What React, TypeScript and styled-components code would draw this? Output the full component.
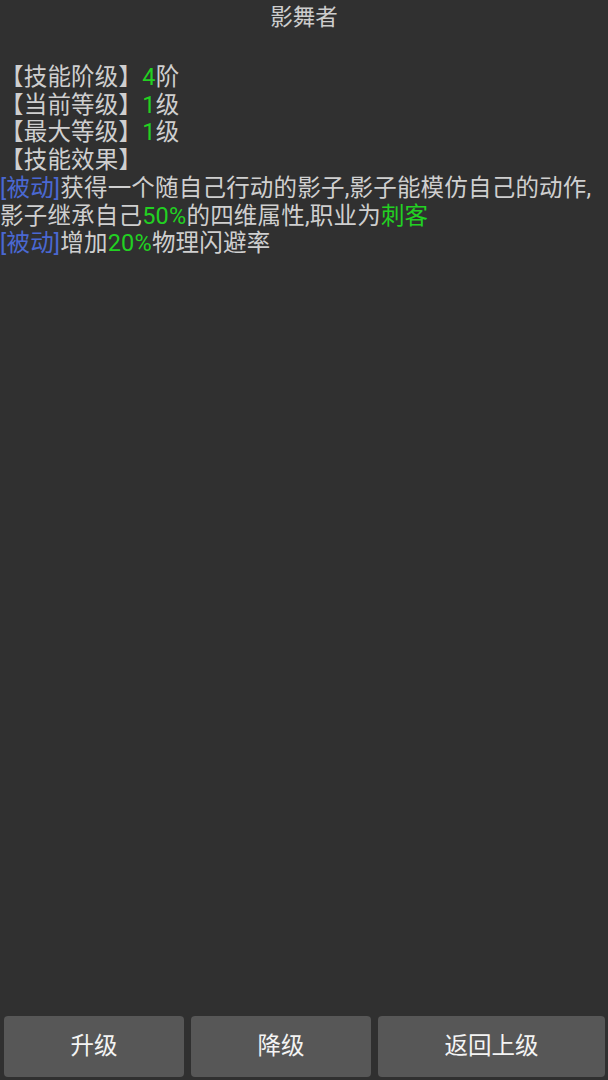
import styled, { createGlobalStyle } from "styled-components";

const GlobalStyle = createGlobalStyle`
    html, body {
        margin: 0;
        padding: 0;
        background-color: #303030;
    }
    body {
        font-family: Roboto, "Noto Sans CJK SC", sans-serif;
    }
`;

const Page = styled.div`
    height: 1080px;
    display: flex;
    flex-direction: column;
    background-color: #303030;
    color: #cfcfcf;
`;

const Title = styled.div`
    text-align: center;
    font-size: 22.5px;
    line-height: 28px;
    padding-top: 3px;
    color: #cdcdcd;
`;

const Content = styled.div`
    flex: 1;
    padding: 33px 0 0 0;
    font-size: 23.5px;
    line-height: 27.7px;
    letter-spacing: 0.2px;
`;

const Line = styled.div`
    white-space: nowrap;
`;

const Green = styled.span`
    color: #22d122;
`;

const Blue = styled.span`
    color: #4a68d2;
`;

const ButtonRow = styled.div`
    display: flex;
    gap: 7px;
    padding: 0 3px 3px 4px;
`;

const Button = styled.button`
    flex: 1 1 auto;
    height: 61px;
    padding: 0;
    border: none;
    border-radius: 4px;
    background-color: #575757;
    color: #f4f4f4;
    font-family: Roboto, "Noto Sans CJK SC", sans-serif;
    font-size: 23.5px;
    line-height: 1;
    cursor: pointer;
`;

export default function App() {
    return (
        <Page>
            <GlobalStyle />
            <Title>影舞者</Title>
            <Content>
                <Line>【技能阶级】<Green>4</Green>阶</Line>
                <Line>【当前等级】<Green>1</Green>级</Line>
                <Line>【最大等级】<Green>1</Green>级</Line>
                <Line>【技能效果】</Line>
                <Line><Blue>[被动]</Blue>获得一个随自己行动的影子,影子能模仿自己的动作,</Line>
                <Line>影子继承自己<Green>50%</Green>的四维属性,职业为<Green>刺客</Green></Line>
                <Line><Blue>[被动]</Blue>增加<Green>20%</Green>物理闪避率</Line>
            </Content>
            <ButtonRow>
                <Button>升级</Button>
                <Button>降级</Button>
                <Button>返回上级</Button>
            </ButtonRow>
        </Page>
    );
}
